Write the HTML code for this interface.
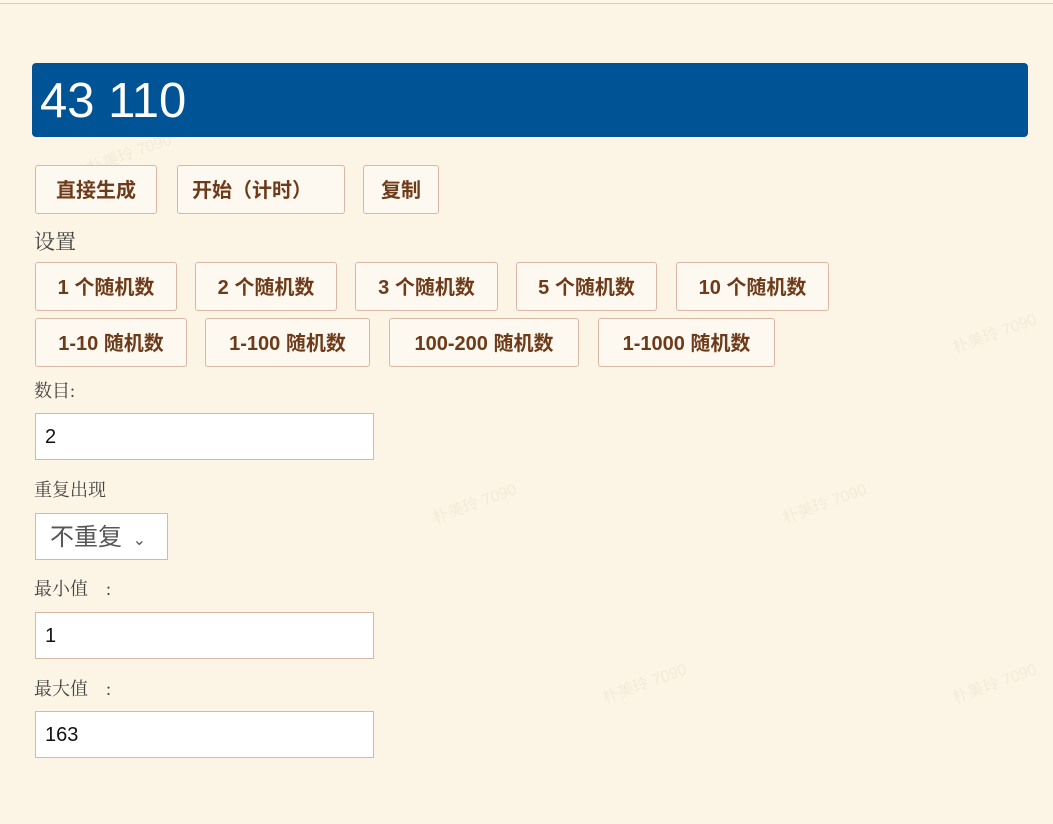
<!DOCTYPE html>
<html><head><meta charset="utf-8"><style>
body{margin:0;width:1053px;height:824px;background:#fcf4e4;position:relative;overflow:hidden;font-family:"Liberation Sans","Noto Sans CJK SC",sans-serif}
.frame{position:absolute;left:0;top:3px;right:0;height:1px;background:#e2c9b5}
.res{position:absolute;left:32px;top:63px;width:996px;height:74px;background:#005496;border-radius:4px;color:#fff;font-size:49px;line-height:76px;padding-left:8px;box-sizing:border-box}
.b{position:absolute;height:49px;box-sizing:border-box;border:1px solid #d8b8a4;border-radius:3px;background:#fdf8f0;color:#6e3b1a;font-weight:bold;font-size:20px;text-align:center;line-height:50px}
.l{position:absolute;left:34px;color:#444;font-size:18px;font-family:"Liberation Serif","Noto Serif CJK SC",serif}
.i{position:absolute;left:35px;width:339px;height:47px;box-sizing:border-box;border:1px solid #d8b8a4;background:#fff;font-size:20px;line-height:47px;padding-left:9px;color:#111}
.s{position:absolute;left:35px;top:513px;width:133px;height:47px;box-sizing:border-box;border:1px solid #d8b8a4;background:#fff;font-size:24px;line-height:47px;padding-left:14px;color:#555}
.wm{position:absolute;color:rgba(200,180,160,.15);font-size:16px;transform:rotate(-20deg)}
</style></head><body>
<div class="frame"></div>
<div class="wm" style="left:85px;top:140px">朴美玲 7090</div>
<div class="wm" style="left:430px;top:490px">朴美玲 7090</div>
<div class="wm" style="left:780px;top:490px">朴美玲 7090</div>
<div class="wm" style="left:600px;top:670px">朴美玲 7090</div>
<div class="wm" style="left:950px;top:670px">朴美玲 7090</div>
<div class="wm" style="left:950px;top:320px">朴美玲 7090</div>
<div class="res">43 110</div>
<div class="b" style="left:35px;top:165px;width:122px">直接生成</div>
<div class="b" style="left:177px;top:165px;width:168px;text-align:left;padding-left:14px">开始（计时）</div>
<div class="b" style="left:363px;top:165px;width:76px">复制</div>
<div class="l" style="top:226px;font-size:21px">设置</div>
<div class="b" style="left:35px;top:262px;width:142px">1 个随机数</div>
<div class="b" style="left:195px;top:262px;width:142px">2 个随机数</div>
<div class="b" style="left:355px;top:262px;width:143px">3 个随机数</div>
<div class="b" style="left:516px;top:262px;width:141px">5 个随机数</div>
<div class="b" style="left:676px;top:262px;width:153px">10 个随机数</div>
<div class="b" style="left:35px;top:318px;width:152px">1-10 随机数</div>
<div class="b" style="left:205px;top:318px;width:165px">1-100 随机数</div>
<div class="b" style="left:389px;top:318px;width:190px">100-200 随机数</div>
<div class="b" style="left:598px;top:318px;width:177px">1-1000 随机数</div>
<div class="l" style="top:377px">数目:</div>
<div class="i" style="top:413px">2</div>
<div class="l" style="top:476px">重复出现</div>
<div class="s">不重复 <span style="font-size:16px;margin-left:4px">⌄</span></div>
<div class="l" style="top:575px">最小值　:</div>
<div class="i" style="top:612px">1</div>
<div class="l" style="top:675px">最大值　:</div>
<div class="i" style="top:711px">163</div>
</body></html>
